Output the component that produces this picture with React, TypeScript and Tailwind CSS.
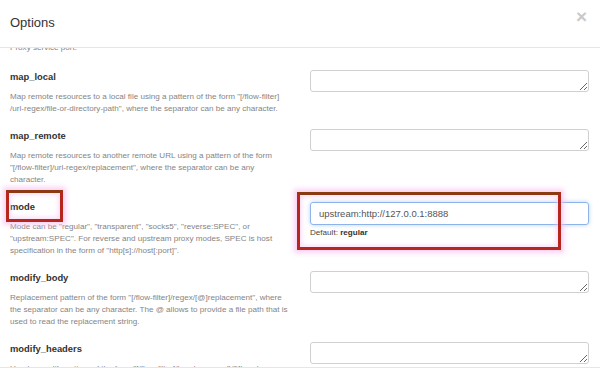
import React from "react";

const options = [
  { name: "map_local", lines: ['Map remote resources to a local file using a pattern of the form "[/flow-filter]', '/url-regex/file-or-directory-path", where the separator can be any character.'] },
  { name: "map_remote", lines: ["Map remote resources to another remote URL using a pattern of the form", '"[/flow-filter]/url-regex/replacement", where the separator can be any', "character."] },
  { name: "mode", lines: ['Mode can be "regular", "transparent", "socks5", "reverse:SPEC", or', '"upstream:SPEC". For reverse and upstream proxy modes, SPEC is host', 'specification in the form of "http[s]://host[:port]".'] },
  { name: "modify_body", lines: ['Replacement pattern of the form "[/flow-filter]/regex/[@]replacement", where', "the separator can be any character. The @ allows to provide a file path that is", "used to read the replacement string."] },
  { name: "modify_headers", lines: ['Header modify pattern of the form "[/flow-filter]/header-name/[@]header-'] },
];

const Annotated = ({ className }: { className: string }) => (
  <div
    className={`absolute border-[3px] border-[#b5261c] border-t-[#8c3a12] shadow-[0_0_5px_3px_rgba(248,190,240,0.7),inset_0_0_4px_2px_rgba(248,200,242,0.6)] pointer-events-none ${className}`}
  />
);

export default function App() {
  return (
    <div className="w-[600px] h-[387px] bg-white flex flex-col overflow-hidden font-['Liberation_Sans',Arial,sans-serif]">
      <div className="h-[48px] shrink-0 border-b border-[#e6e6e6] flex items-center justify-between pl-[10px] pr-[13px] relative z-10 bg-white">
        <h1 className="text-[13px] text-[#333] mt-[-2px]">Options</h1>
        <span className="text-[19px] font-bold text-[#c9c9c9] leading-none mt-[-14px]">×</span>
      </div>
      <div className="flex-1 min-h-0 overflow-hidden">
        <div className="-mt-[6px] px-[10px]">
          <p className="text-[8.1px] leading-[12px] text-[#858585] whitespace-nowrap">Proxy service port.</p>
          <div className="mt-[16px] flex flex-col">
            {options.map((o) => (
              <div key={o.name} className="grid grid-cols-[280px_280px] gap-x-[20px] pb-[14px] relative">
                <div>
                  <h3 className="text-[9.4px] leading-[14px] font-bold text-[#333]">{o.name}</h3>
                  <div className="mt-[7px] text-[8.1px] leading-[12px] text-[#858585] whitespace-nowrap">
                    {o.lines.map((l, i) => (
                      <div key={i}>{l}</div>
                    ))}
                  </div>
                </div>
                <div>
                  {o.name === "mode" ? (
                    <>
                      <input
                        readOnly
                        value="upstream:http://127.0.0.1:8888"
                        className="w-[279px] h-[23px] border border-[#8db4ea] rounded-[3px] px-[8px] text-[9.5px] text-[#555] outline-none shadow-[0_0_4px_rgba(102,155,233,0.45)]"
                      />
                      <p className="mt-[2px] text-[8.1px] leading-[12px] text-[#444]">
                        Default: <b className="text-[#333]">regular</b>
                      </p>
                    </>
                  ) : (
                    <textarea
                      readOnly
                      className="block w-[279px] h-[22px] border border-[#d0d0d0] rounded-[3px] resize-y outline-none"
                    />
                  )}
                </div>
                {o.name === "mode" && (
                  <>
                    <Annotated className="left-[-4px] top-[-10px] w-[57px] h-[32px]" />
                    <Annotated className="left-[287px] top-[-8px] w-[264px] h-[58px]" />
                  </>
                )}
              </div>
            ))}
          </div>
        </div>
      </div>
      <div className="h-[20px] shrink-0 border-t border-[#e6e6e6] bg-white" />
    </div>
  );
}
